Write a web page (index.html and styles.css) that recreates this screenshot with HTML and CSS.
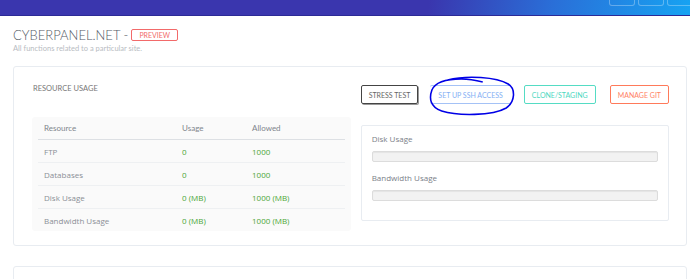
FILE: index.html
```html
<!DOCTYPE html>
<html lang="en">
<head>
    <meta charset="UTF-8">
    <title>CyberPanel - cyberpanel.net</title>
    <link rel="stylesheet" href="styles.css">
</head>
<body>
    <div class="topbar">
        <div class="topbar-btns">
            <span></span><span></span><span></span>
        </div>
    </div>

    <div class="page-title">
        <h2>CYBERPANEL.NET - <span class="badge">PREVIEW</span></h2>
        <p>All functions related to a particular site.</p>
    </div>

    <div class="card">
        <div class="col-left">
            <h3>RESOURCE USAGE</h3>
            <div class="table-wrap">
                <table>
                    <tr><th>Resource</th><th>Usage</th><th>Allowed</th></tr>
                    <tr><td>FTP</td><td class="val">0</td><td class="val">1000</td></tr>
                    <tr><td>Databases</td><td class="val">0</td><td class="val">1000</td></tr>
                    <tr><td>Disk Usage</td><td class="val">0 (MB)</td><td class="val">1000 (MB)</td></tr>
                    <tr><td>Bandwidth Usage</td><td class="val">0 (MB)</td><td class="val">1000 (MB)</td></tr>
                </table>
            </div>
        </div>
        <div class="col-right">
            <div class="actions">
                <a class="btn btn-dark">STRESS TEST</a>
                <a class="btn btn-blue">SET UP SSH ACCESS
                    <svg class="circled" viewBox="0 0 90 40" preserveAspectRatio="none">
                        <path d="M20 4 C40 -1 70 1 82 8 C90 13 89 26 80 32 C66 40 30 40 14 35 C2 31 1 22 4 14 C7 7 18 3 34 3 C44 3 52 5 56 6" fill="none" stroke="#0000e6" stroke-width="1.6"/>
                    </svg>
                </a>
                <a class="btn btn-teal">CLONE/STAGING</a>
                <a class="btn btn-orange">MANAGE GIT</a>
            </div>
            <div class="usage-panel">
                <label>Disk Usage</label>
                <div class="progress"></div>
                <label>Bandwidth Usage</label>
                <div class="progress"></div>
            </div>
        </div>
    </div>

    <div class="card card-next"></div>
</body>
</html>
```

FILE: styles.css
```css
body {
    margin: 0;
    font-family: "Open Sans", sans-serif;
    background: #fff;
    overflow: hidden;
}
.topbar {
    height: 15px;
    background: linear-gradient(100deg, #3a36ae 0%, #3a36ae 62%, #2a6fd8 80%, #16a3f2 100%);
    border-bottom: 1px solid #2c2a96;
    display: flex;
    justify-content: flex-end;
}
.topbar-btns {
    display: flex;
    gap: 3px;
    margin-right: -3px;
}
.topbar-btns span {
    width: 24px;
    height: 5px;
    border: 1px solid rgba(255, 255, 255, 0.3);
    border-top: none;
    border-radius: 0 0 3px 3px;
}
.page-title {
    padding: 13px 0 0 13px;
}
.page-title h2 {
    margin: 0;
    font-family: Lato, sans-serif;
    font-weight: 300;
    font-size: 13px;
    line-height: 12px;
    color: #555b66;
    display: flex;
    align-items: center;
    gap: 3px;
}
.badge {
    font-size: 7px;
    font-weight: 400;
    color: #f26a6a;
    border: 1px solid #f26a6a;
    border-radius: 2px;
    padding: 2px 7px;
    line-height: 6px;
}
.page-title p {
    margin: 3px 0 0;
    font-family: Lato, sans-serif;
    font-size: 7.5px;
    line-height: 9px;
    color: #b8bcc2;
}
.card {
    margin: 13px 3px 0 13px;
    border: 1px solid #e8ecf1;
    border-radius: 3px;
    padding: 17px 17px 14px 18px;
    display: flex;
    gap: 10px;
}
.card-next {
    margin-top: 20px;
    height: 20px;
    padding: 0;
}
.col-left {
    width: 319px;
}
.col-left h3 {
    margin: 0 0 0 1px;
    font-family: Lato, sans-serif;
    font-weight: 400;
    font-size: 7.5px;
    line-height: 9px;
    color: #777;
}
.table-wrap {
    margin-top: 24px;
    background: #fafafa;
    border-radius: 3px;
    padding: 0 6px;
}
table {
    width: 100%;
    border-collapse: collapse;
    font-size: 8px;
}
th, td {
    text-align: left;
    font-weight: 400;
    color: #8a8f96;
    height: 22px;
    padding: 0 6px;
}
th {
    font-family: Lato, sans-serif;
    font-size: 8px;
    color: #80858c;
    border-bottom: 1px solid #dde0e4;
}
th:first-child, td:first-child {
    width: 126px;
}
th:nth-child(2), td:nth-child(2) {
    width: 58px;
}
tr + tr td {
    border-top: 1px solid #eef0f2;
}
td.val {
    color: #4aa637;
}
.col-right {
    flex: 1;
}
.actions {
    display: flex;
    gap: 12px;
    margin-top: 1px;
}
.btn {
    position: relative;
    display: flex;
    align-items: center;
    height: 17px;
    padding: 0 7px;
    font-family: Lato, sans-serif;
    font-size: 7px;
    border: 1px solid;
    border-radius: 2px;
    white-space: nowrap;
}
.btn-dark {
    color: #666;
    border-color: #444;
    box-shadow: 1px 1px 0 #999;
}
.btn-blue {
    color: #86b0f4;
    border-color: #a4c2f6;
    border-left: none;
    border-right: none;
    padding: 0 8px;
}
.btn-teal {
    color: #4dd8bf;
    border-color: #55dcc4;
    margin-left: 1px;
}
.btn-orange {
    color: #ff8466;
    border-color: #ff7a5a;
    margin-left: 2px;
}
.circled {
    position: absolute;
    left: -2px;
    top: -10px;
    width: 88px;
    height: 40px;
    pointer-events: none;
}
.usage-panel {
    margin-top: 21px;
    border: 1px solid #e8ecf1;
    border-radius: 2px;
    padding: 7px 10px 10px;
}
.usage-panel label {
    display: block;
    font-size: 8px;
    line-height: 12px;
    color: #7a8088;
    margin-bottom: 6px;
}
.progress {
    height: 9px;
    background: #f2f2f2;
    border: 1px solid #dcdcdc;
    border-radius: 2px;
    box-shadow: inset 0 1px 1px rgba(0, 0, 0, 0.06);
    margin-bottom: 10px;
}
.progress:last-child {
    margin-bottom: 9px;
}
```
